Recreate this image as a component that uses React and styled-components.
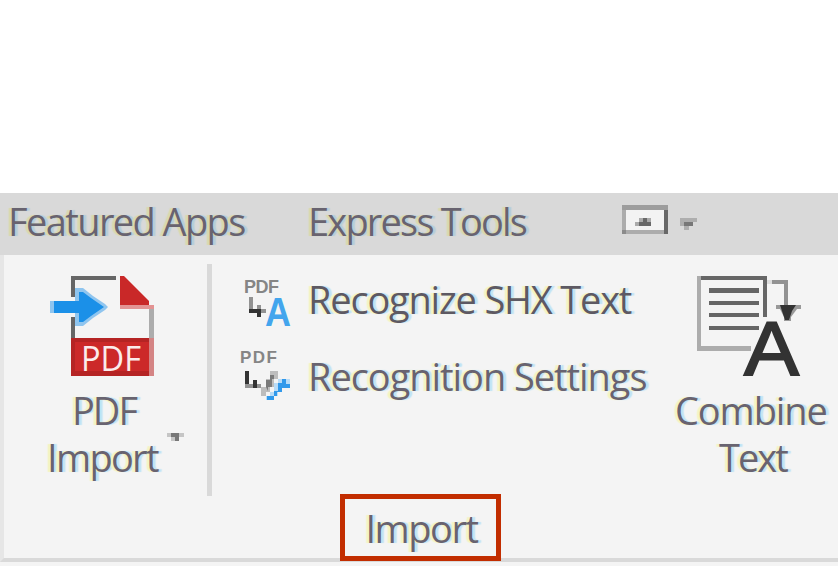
import React from "react";
import styled, { createGlobalStyle } from "styled-components";

const GlobalStyle = createGlobalStyle`
  * { box-sizing: border-box; }
  body { margin: 0; background: #fff; font-family: "Open Sans", "Noto Sans", sans-serif; }
`;

const Page = styled.main`
  width: 838px;
  height: 566px;
  padding-top: 193px;
  overflow: hidden;
  background: #fff;
`;

const TabBar = styled.nav`
  display: flex;
  height: 62px;
  padding-left: 8px;
  background: #d9d9d9;
`;

const Label = styled.span`
  display: block;
  height: 47px;
  line-height: 47px;
  font-size: 38px;
  letter-spacing: ${(p) => p.$track || 0}px;
  white-space: nowrap;
  color: ${(p) => p.$color || "#686370"};
  text-shadow: ${(p) =>
    p.$tab
      ? "-3px 0 1px #d9d9ac, 3px 0 1px #b5ceda"
      : "-3px 0 1px #f4f4c0, 3px 0 1px #bfe4f5"};
`;

const Tab = styled.div`
  width: ${(p) => p.$width}px;
  padding-top: 5px;
`;

const TabControls = styled.svg`
  display: block;
  width: 90px;
  height: 62px;
`;

const Panel = styled.section`
  height: 307px;
  background: #f4f4f4;
  border-left: 4px solid #e6e6e6;
  border-bottom: 4px solid #d9d9d9;
`;

const Tools = styled.div`
  display: grid;
  grid-template-columns: 203px 5px 459px 167px;
  height: 239px;
`;

const LargeTool = styled.div`
  display: flex;
  flex-direction: column;
  align-items: flex-start;
  padding-top: 21px;
`;

const LargeIcon = styled.svg`
  display: block;
  flex: none;
  width: 108px;
  height: 102px;
  margin-left: ${(p) => p.$left || 0}px;
  overflow: visible;
`;

const Line = styled.div`
  display: flex;
  height: 47px;
  margin-left: ${(p) => p.$left || 0}px;
  margin-top: ${(p) => p.$top || 0}px;
`;

const Divider = styled.div`
  height: 232px;
  margin-top: 9px;
  background: #d9d9d9;
`;

const ToolList = styled.div`
  padding: 7px 0 0 26px;
`;

const ToolRow = styled.div`
  display: flex;
  height: 77px;
  padding-top: 14px;
`;

const SmallIcon = styled.svg`
  display: block;
  flex: none;
  width: 70px;
  height: 56px;
  overflow: visible;
`;

const DropArrow = styled.svg`
  width: 18px;
  height: 10px;
  margin: -1px 0 0 9px;
`;

const PanelTitle = styled.div`
  position: relative;
  display: flex;
  justify-content: center;
  width: 161px;
  height: 67px;
  margin-left: 336px;
  padding: 6px 0 0 2px;
  border: 5px solid #c22d00;
  background: #f4f4f4;
`;

const Footer = styled.div`
  height: 4px;
  background: #f4f4f4;
`;

function PdfImportIcon() {
  return (
    <LargeIcon $left={46} viewBox="50 276 108 102">
      <path d="M116 278H73V297M73 317V338" fill="none" stroke="#666" strokeWidth="4" />
      <path d="M120 276h4l25 25v4h-29z" fill="#c92828" />
      <path d="M120 305h34v4h-34z" fill="#e39393" />
      <path d="M149 309h5v29h-5z" fill="#acacac" />
      <path d="M71 338h78v38H71z" fill="#b52424" />
      <path d="M75 342h74v29H75z" fill="#cc2929" />
      <path d="M149 338h5v38h-5z" fill="#d48484" />
      <path d="M50 301h4v12h-4zM75 288h8l10 8 12 8 3 3-3 3-12 8-10 8h-8z" fill="#8fc5ef" />
      <path d="M54 301h25v-9h4l8 6 13 9-13 9-8 6h-4v-9H54z" fill="#1b90e8" />
      <text x="81" y="371" fontFamily="Open Sans" fontSize="34" textLength="60" lengthAdjust="spacingAndGlyphs" fill="#fbecec">PDF</text>
    </LargeIcon>
  );
}

function RecognizeTextIcon() {
  return (
    <SmallIcon viewBox="238 276 70 56">
      <text x="244" y="293" fontFamily="Liberation Sans" fontSize="18" fontWeight="700" textLength="35" fill="#858585">PDF</text>
      <path d="M249 297h4v12h-4z" fill="#929292" />
      <path d="M249 309h12v4h-12zM257 313h4v4h-4z" fill="#333" />
      <path d="M257 305h4v4h-4zM261 309h5v4h-5z" fill="#929292" />
      <text x="265" y="326" fontFamily="Liberation Sans" fontSize="41" fontWeight="700" textLength="26" lengthAdjust="spacingAndGlyphs" fill="#43a5ed">A</text>
    </SmallIcon>
  );
}

function RecognitionSettingsIcon() {
  return (
    <SmallIcon viewBox="238 353 70 56">
      <text x="240" y="363" fontFamily="Liberation Sans" fontSize="17" fontWeight="700" textLength="37" fill="#858585">PDF</text>
      <path d="M245 371h4v13h-4zM253 380h4v8h-4z" fill="#333" />
      <path d="M245 384h8v4h-8zM257 384h4v4h-4z" fill="#929292" />
      <path d="M261 396v-9h5v-8h4v-8h8v8h-4v8h-4v5h-4v4z" fill="#bdbdbd" />
      <path d="M266 387v-7h4v-5h4v4h-2v8h-4v4z" fill="#7a7a7a" />
      <path d="M266 400v-4h4v-4h4v-9h4v-4h12v9h-8v4h-4v4h-4v4z" fill="#b9dcf7" />
      <path d="M267 400v-4h7v-5h4v-8h4v-4h4v5h4v4h-8v4h-5v4h-3v4z" fill="#3199eb" />
    </SmallIcon>
  );
}

function CombineTextIcon() {
  return (
    <LargeIcon $left={24} viewBox="695 276 108 102">
      <path d="M697 276h4v70h50v5h-54z" fill="#acacac" />
      <path d="M701 276h66v41h-4v-37h-62z" fill="#666" />
      <path d="M709 288h50v5h-50zM709 301h50v4h-50zM709 313h50v4h-50zM709 326h50v4h-50z" fill="#666" />
      <path d="M772 280h16v25h-4v-21h-12z" fill="#929292" />
      <path d="M767 280h5v4h-5z" fill="#ddd" />
      <path d="M776 305h25v4h-4l-6 8v4h-7v-4l-4-8h-4z" fill="#999" />
      <path d="M780 305h16l-4 6-3 9h-4l-3-9z" fill="#333" />
      <text x="744" y="375" fontFamily="Liberation Sans" fontSize="76" textLength="55" lengthAdjust="spacingAndGlyphs" fill="#333" stroke="#333" strokeWidth="1.8">A</text>
    </LargeIcon>
  );
}

export default function App() {
  return (
    <>
      <GlobalStyle />
      <Page>
        <TabBar>
          <Tab $width={300}><Label $tab $track={-1.6}>Featured Apps</Label></Tab>
          <Tab $width={304}><Label $tab $track={-1.8}>Express Tools</Label></Tab>
          <TabControls viewBox="612 193 90 62">
            <path d="M622 205h46v29h-46z" fill="#acacac" />
            <path d="M622 205h46v5h-46z" fill="#9d9d9d" />
            <path d="M664 210h4v24h-4z" fill="#686868" />
            <path d="M622 230h4v4h-4z" fill="#8b8b8b" />
            <path d="M626 210h38v20h-38z" fill="#f3f3f3" />
            <path d="M635 222h4v-4h12v8h-16z" fill="#aaa" />
            <path d="M643 218h4v4h4v4h-12v-4h4z" fill="#686868" />
            <path d="M680 218h17v4h-4v4h-4v4h-5v-4h-4z" fill="#aeaeae" />
            <path d="M684 222h9v4h-9z" fill="#777" />
          </TabControls>
        </TabBar>
        <Panel>
          <Tools>
            <LargeTool>
              <PdfImportIcon />
              <Line $left={68} $top={9}><Label $track={-2}>PDF</Label></Line>
              <Line $left={43}>
                <Label $track={-1.7}>Import</Label>
                <DropArrow viewBox="0 0 18 10">
                  <path d="M0 0h17v4h-5v4H4V4H0z" fill="#c5c5c5" />
                  <path d="M4 0h8v8H8V4H4z" fill="#777" />
                </DropArrow>
              </Line>
            </LargeTool>
            <Divider />
            <ToolList>
              <ToolRow>
                <RecognizeTextIcon />
                <Label $color="#5d5963" $track={-1.2}>Recognize SHX Text</Label>
              </ToolRow>
              <ToolRow>
                <RecognitionSettingsIcon />
                <Label $track={-1.05}>Recognition Settings</Label>
              </ToolRow>
            </ToolList>
            <LargeTool>
              <CombineTextIcon />
              <Line $left={4} $top={9}><Label $track={-1.1}>Combine</Label></Line>
              <Line $left={48}><Label $track={-2}>Text</Label></Line>
            </LargeTool>
          </Tools>
          <PanelTitle><Label $track={-1.5}>Import</Label></PanelTitle>
        </Panel>
        <Footer />
      </Page>
    </>
  );
}
